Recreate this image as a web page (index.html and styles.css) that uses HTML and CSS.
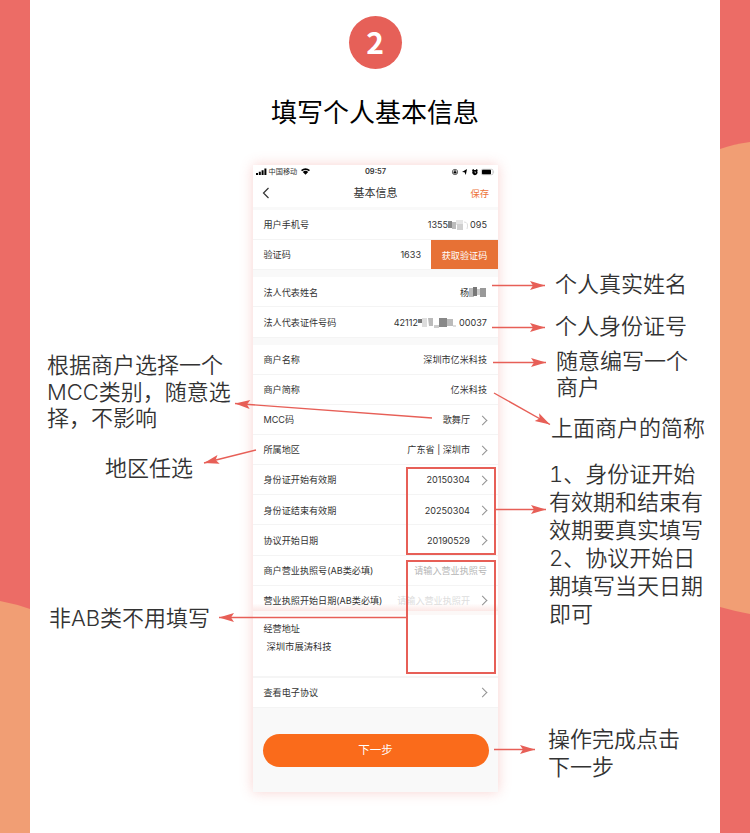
FILE: index.html
```html
<!DOCTYPE html>
<html lang="zh-CN">
<head>
<meta charset="utf-8">
<title>填写个人基本信息</title>
<link rel="stylesheet" href="styles.css">
</head>
<body>
<div class="page">
  <svg class="side" viewBox="0 0 30 833"><rect width="30" height="833" fill="#ec6c66"/><path d="M0 601Q16 604 30 609V833H0z" fill="#f19e74"/></svg>
  <main class="sheet">
    <header class="head">
      <div class="step">2</div>
      <h1>填写个人基本信息</h1>
    </header>
    <div class="guide">
      <aside class="notes notes-left">
        <p class="note mcc">根据商户选择一个<br>MCC类别，随意选<br>择，不影响</p>
        <p class="note region">地区任选</p>
        <p class="note optional">非AB类不用填写</p>
      </aside>
      <section class="phone">
        <div class="status">
          <span class="carrier"><svg width="11" height="7" viewBox="0 0 11 7"><path d="M0 5h2v2H0zM2.8 3.8h2V7h-2zM5.6 2.2h2V7h-2zM8.4 .5h2V7h-2z"/></svg><span>中国移动</span><svg width="9" height="7" viewBox="0 0 9 7"><path d="M0 2.1Q4.5-1.5 9 2.1L7.9 3.3Q4.5.6 1.1 3.3zM1.8 3.9Q4.5 1.8 7.2 3.9L4.5 6.8z"/></svg></span>
          <b>09:57</b>
          <span class="gauges"><svg width="44" height="8" viewBox="0 0 44 8"><circle cx="4" cy="4" r="2.7" fill="none" stroke="#444" stroke-width=".8"/><path d="M2.5 3.5h3v2h-3zM3.5 2h1v2h-1zM11 4l5-3-1.2 6-1.3-2.7zM21 2.1l1.4-1 .8.8h1.5l.8-.8 1.3 1-.5 1.1a2.7 2.7 0 1 1-4.8 0z"/><path d="M24 3.2v1.5h1" fill="none" stroke="#fff" stroke-width=".6"/><rect x="30.4" y="1.3" width="11.6" height="5.4" rx="1.3" fill="none" stroke="#aaa" stroke-width=".6"/><rect x="31" y="1.8" width="9" height="4.4" rx=".7"/><path d="M42.7 3v2q1-1 0-2" fill="#999"/></svg></span>
        </div>
        <div class="nav">
          <svg width="8" height="12" viewBox="0 0 8 12"><path d="M6.5 1 1.5 6l5 5" fill="none" stroke="#333" stroke-width="1.2"/></svg>
          <span class="nav-title">基本信息</span>
          <span class="save">保存</span>
        </div>
        <div class="row after-nav"><span>用户手机号</span><span class="value">1355<svg class="mask" width="22" height="12" viewBox="0 0 22 12"><path d="M0 2h4v7H0z" fill="#888"/><path d="M4 3h4v7H4z" fill="#bbb"/><path d="M8 1h7v5H8z" fill="#e5e5e5"/><path d="M9 5h6v6H9z" fill="#d0d0d0"/><path d="M16 3q5 0 3 7" fill="none" stroke="#ddd"/></svg>095</span></div>
        <div class="row code"><span>验证码</span><span class="value">1633</span><span class="get">获取验证码</span></div>
        <div class="row group"><span>法人代表姓名</span><span class="value">杨<svg class="mask" width="18" height="11" viewBox="0 0 18 11"><path d="M0 1h5v9H0z" fill="#bbb"/><path d="M4 0h4v9H4z" fill="#777"/><path d="M8 2h3v6H8z" fill="#ccc"/><path d="M11 1h6v9h-6z" fill="#999"/></svg></span></div>
        <div class="row"><span>法人代表证件号码</span><span class="value">42112<svg class="mask" width="41" height="12" viewBox="0 0 41 12"><path d="M0 2h5v4H0z" fill="#777"/><path d="M4 1h5v9H4z" fill="#ddd"/><path d="M10 1h5v8h-4z" fill="#bbb"/><path d="M16 8h5v3h-5z" fill="#ccc"/><path d="M21 1h8v9h-8z" fill="#888"/><path d="M29 2h6v7h-6z" fill="#bbb"/><path d="M35 8h3v2h-3z" fill="#ddd"/></svg>00037</span></div>
        <div class="row group"><span>商户名称</span><span class="value">深圳市亿米科技</span></div>
        <div class="row"><span>商户简称</span><span class="value">亿米科技</span></div>
        <div class="row link"><span>MCC码</span><span class="value">歌舞厅</span></div>
        <div class="row link"><span>所属地区</span><span class="value">广东省 | 深圳市</span></div>
        <div class="row link"><span>身份证开始有效期</span><span class="value">20150304</span></div>
        <div class="row link"><span>身份证结束有效期</span><span class="value">20250304</span></div>
        <div class="row link"><span>协议开始日期</span><span class="value">20190529</span></div>
        <div class="row"><span>商户营业执照号(AB类必填)</span><span class="value hint">请输入营业执照号</span></div>
        <div class="row link seam"><span>营业执照开始日期(AB类必填)</span><span class="value faint">请输入营业执照开</span></div>
        <div class="address"><span>经营地址</span><span class="address-value">深圳市展涛科技</span></div>
        <div class="row link agreement"><span>查看电子协议</span></div>
        <div class="next">下一步</div>
      </section>
      <aside class="notes notes-right">
        <p class="note name">个人真实姓名</p>
        <p class="note idno">个人身份证号</p>
        <p class="note shop">随意编写一个<br>商户</p>
        <p class="note short">上面商户的简称</p>
        <p class="note dates">1、身份证开始<br>有效期和结束有<br>效期要真实填写<br>2、协议开始日<br>期填写当天日期<br>即可</p>
        <p class="note done">操作完成点击<br>下一步</p>
      </aside>
    </div>
  </main>
  <svg class="side" viewBox="0 0 30 833"><rect width="30" height="833" fill="#ec6c66"/><path d="M0 149Q14 144 30 142V614Q14 611 0 607z" fill="#f19e74"/></svg>
  <svg class="arrows" width="750" height="833" viewBox="0 0 750 833">
    <defs><marker id="tip" viewBox="-16 -5 17 10" refX="0" refY="0" markerWidth="17" markerHeight="10" markerUnits="userSpaceOnUse" orient="auto"><path d="M0 0-15-4.5-12 0-15 4.5z" fill="#e75f57"/></marker></defs>
    <g fill="none" stroke="#e75f57" stroke-width="1.4">
      <path class="arrow" d="M492 285.5H545"/>
      <path class="arrow" d="M492 327.5H545"/>
      <path class="arrow" d="M493 362.5H546"/>
      <path class="arrow" d="M494 393 550 424.500"/>
      <path class="arrow" d="M496 509.500H546"/>
      <path class="arrow" d="M494 749.500H535"/>
      <path class="arrow" d="M432 418 235 403.500"/>
      <path class="arrow" d="M256 450 204 463"/>
      <path class="arrow" d="M407 617.500H219"/>
      <rect x="407" y="468" width="88" height="86" stroke-width="2"/>
      <rect x="407" y="561" width="88" height="112" stroke-width="2"/>
    </g>
  </svg>
</div>
</body>
</html>
```
FILE: styles.css
```css
* { box-sizing: border-box; }
body {
  margin: 0;
  font-family: Inter, "Noto Sans CJK SC", sans-serif;
  color: #333;
}
.page { position: relative; display: flex; width: 750px; height: 833px; overflow: hidden; }
.side { flex: none; width: 30px; height: 833px; }
.sheet { flex: none; width: 690px; background: #fff; }
.head { display: flex; flex-direction: column; align-items: center; height: 165px; padding-top: 16px; }
.step {
  width: 53px; height: 53px; border-radius: 50%;
  background: #e66058; color: #fff;
  font: 700 30px/51px "Noto Sans CJK SC", sans-serif;
  text-align: center;
}
h1 { margin: 24px 0 0; font-size: 26px; line-height: 40px; font-weight: 400; color: #000; }

.guide { display: flex; }
.notes { flex: none; }
.notes-left { width: 223px; }
.notes-right { width: 222px; }
.note { margin: 0; font-size: 22px; line-height: 28px; font-weight: 350; white-space: nowrap; }
.mcc { margin: 187px 0 0 17px; line-height: 26.500px; }
.region { margin: 22px 0 0 75px; }
.optional { margin: 122px 0 0 19px; }
.name { margin: 105px 0 0 57px; }
.idno { margin: 14px 0 0 57px; }
.shop { margin: 8px 0 0 58px; line-height: 26px; }
.short { margin: 14px 0 0 53px; }
.dates { margin: 18px 0 0 51px; font-variant-numeric: tabular-nums; }
.done { margin: 97px 0 0 50px; }

.phone {
  flex: none; width: 245px; height: 627px;
  background: #f9f9f9;
  box-shadow: 0 0 12px rgba(231, 95, 87, .28);
  font-size: 9.100px;
}
.status {
  display: grid; grid-template-columns: 1fr auto 1fr; align-items: center;
  height: 13px; padding: 0 3px; background: #fff;
  font-size: 7.200px; line-height: 13px;
}
.carrier, .gauges { display: flex; align-items: center; gap: 1.500px; }
.gauges { justify-content: flex-end; }
.carrier svg:last-child { margin-left: 2px; }
.status b { font-weight: 600; font-size: 7.500px; }
.nav {
  display: grid; grid-template-columns: 1fr auto 1fr; align-items: center;
  height: 29px; padding: 1px 9px 0; background: #fff;
}
.nav-title { font-size: 11px; line-height: 18px; }
.save { justify-self: end; color: #ed7439; font-size: 9.300px; }
.row {
  display: flex; align-items: center; justify-content: space-between;
  height: 30.150px; padding: 1.500px 11px 0 10.500px;
  background: #fff; border-bottom: 1px solid #f4f4f4;
  line-height: 14px; white-space: nowrap;
}
.after-nav { margin-top: 3px; }
.group { margin-top: 7px; }
.value { display: flex; align-items: center; }
.mask { filter: blur(.7px); }
.code { padding-right: 0; }
.code .value { margin-left: auto; margin-right: 10px; }
.get { align-self: stretch; width: 67px; margin-top: -1.500px; background: #e77135; color: #fff; line-height: 31px; text-align: center; }
.link::after {
  content: ""; width: 6px; height: 6px; margin: 0 0 0 10px;
  border: solid #929292; border-width: 1px 1px 0 0;
  transform: translateX(-1px) rotate(45deg);
}
.link .value { margin-left: auto; }
.hint { color: #b5b5b5; }
.faint { color: #ddd; }
.seam { height: 29.500px; border-bottom: 4px solid #fcf8f7; background: linear-gradient(#fff 70%, #fbe7e5); padding-top: 5px; }
.address {
  display: flex; flex-direction: column; gap: 4px;
  height: 63px; padding: 7px 10.500px;
  background: #fff; border-bottom: 2px solid #f5f5f5;
  line-height: 14px;
}
.address-value { padding-left: 3px; font-size: 9.300px; }
.agreement { padding-top: 0; }
.next {
  height: 33px; margin: 26px 9.500px 0; border-radius: 17px;
  background: #fa6b1b; color: #fff;
  font-size: 11.500px; line-height: 33px; text-align: center;
}
.arrows { position: absolute; inset: 0; }
.arrow { marker-end: url(#tip); }
```
